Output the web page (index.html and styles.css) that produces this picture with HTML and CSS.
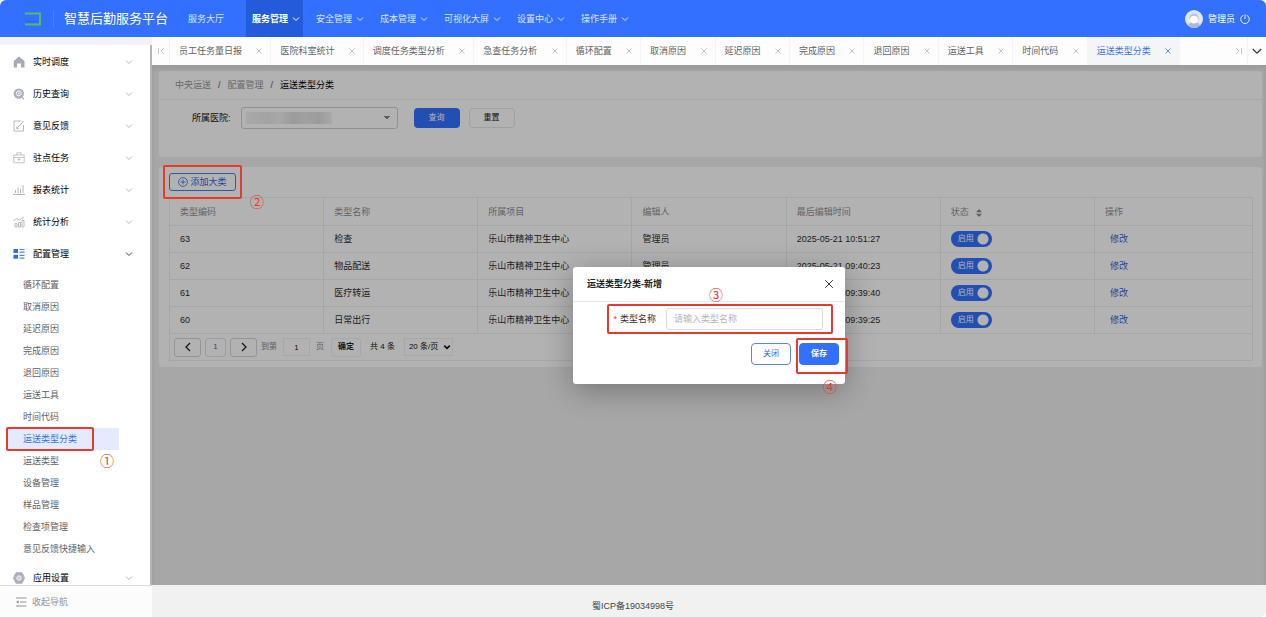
FILE: index.html
```html
<!DOCTYPE html>
<html lang="zh-CN">
<head>
<meta charset="utf-8">
<title>智慧后勤服务平台</title>
<link rel="stylesheet" href="styles.css">
</head>
<body>
<svg class="defs" aria-hidden="true">
  <symbol id="down" viewBox="0 0 8 8"><path d="M1 2.5 4 5.5 7 2.5" fill="none" stroke="currentColor"/></symbol>
  <symbol id="cross" viewBox="0 0 8 8"><path d="M1.5 1.5 6.5 6.5M6.5 1.5 1.5 6.5" fill="none" stroke="currentColor" stroke-width=".8"/></symbol>
</svg>
<div class="app">
  <header class="topbar">
    <svg class="logo" viewBox="0 0 18 16"><path d="M1 2.5H16V13.5H1" fill="none" stroke="#58b86a" stroke-width="2"/><path d="M3 10.5H13" stroke="#2f62d8"/></svg>
    <h1 class="brand">智慧后勤服务平台</h1>
    <nav class="topnav">
      <a class="topnav-item" href="#">服务大厅</a>
      <a class="topnav-item active" href="#">服务管理<svg class="ico8"><use href="#down"/></svg></a>
      <a class="topnav-item" href="#">安全管理<svg class="ico8"><use href="#down"/></svg></a>
      <a class="topnav-item" href="#">成本管理<svg class="ico8"><use href="#down"/></svg></a>
      <a class="topnav-item" href="#">可视化大屏<svg class="ico8"><use href="#down"/></svg></a>
      <a class="topnav-item" href="#">设置中心<svg class="ico8"><use href="#down"/></svg></a>
      <a class="topnav-item" href="#">操作手册<svg class="ico8"><use href="#down"/></svg></a>
    </nav>
    <div class="user">
      <svg class="avatar" viewBox="0 0 18 18"><circle cx="9" cy="9" r="9" fill="#dfe8fb"/><path d="M3 15.5Q4 12 9 12T15 15.5Q12 18 9 18T3 15.5" fill="#a9b9dd"/><circle cx="9" cy="8" r="4.6" fill="#b4c3e4"/><circle cx="9" cy="9.6" r="3.9" fill="#fff"/></svg>
      <span>管理员</span>
      <button class="power" aria-label="退出"><svg viewBox="0 0 10 10"><path d="M3.3 1.3A4.3 4.3 0 1 0 6.7 1.3M5 .5V5" fill="none" stroke="currentColor" stroke-width=".9"/></svg></button>
    </div>
  </header>
  <div class="body">
    <aside class="sidebar">
      <ul class="menu">
        <li><a class="menu-item" href="#"><svg class="ico12" viewBox="0 0 12 12"><path d="M6 .5 11.5 5V11.5H8V7.5H4V11.5H.8V5Z" fill="#a6aab8"/></svg><span>实时调度</span><svg class="ico8"><use href="#down"/></svg></a></li>
        <li><a class="menu-item" href="#"><svg class="ico12" viewBox="0 0 12 12"><circle cx="5.8" cy="5.6" r="5.2" fill="#adb0bf"/><circle cx="5.8" cy="5.4" r="2.4" fill="none" stroke="#fff"/><circle cx="5.8" cy="5.4" r=".8" fill="#fff"/><path d="M7.5 7.5 11 11.3" stroke="#adb0bf" stroke-width="1.2"/></svg><span>历史查询</span><svg class="ico8"><use href="#down"/></svg></a></li>
        <li><a class="menu-item" href="#"><svg class="ico12" viewBox="0 0 12 12"><path d="M8 1H1V11H10.5V5M4 8.3 11 .8M3.6 6.5V8.5H5.5" fill="none" stroke="#b0b2ba" stroke-width=".9"/></svg><span>意见反馈</span><svg class="ico8"><use href="#down"/></svg></a></li>
        <li><a class="menu-item" href="#"><svg class="ico12" viewBox="0 0 12 12"><path d="M.8 3H11.2V10.8H.8ZM3.8 3V.8H8.2V3M.8 5.5H11.2M4.5 7.5H7.5M6 6V9" fill="none" stroke="#b4b6be" stroke-width=".8"/></svg><span>驻点任务</span><svg class="ico8"><use href="#down"/></svg></a></li>
        <li><a class="menu-item" href="#"><svg class="ico12" viewBox="0 0 12 12"><path d="M0 10.5H12M2.5 9V6M5 9V3.5M7.5 9V5M10 9V1" fill="none" stroke="#b4b6be"/></svg><span>报表统计</span><svg class="ico8"><use href="#down"/></svg></a></li>
        <li><a class="menu-item" href="#"><svg class="ico12" viewBox="0 0 12 12"><path d="M.5 5 3.5 2.5 6.5 4 11 .8M2 7.5H4V11H2ZM5.5 6.5H7.5V11H5.5ZM9 4.5H11V11H9Z" fill="none" stroke="#b4b6be" stroke-width=".9"/></svg><span>统计分析</span><svg class="ico8"><use href="#down"/></svg></a></li>
        <li class="open"><a class="menu-item" href="#"><svg class="ico12" viewBox="0 0 12 12"><path d="M.5 1H5V5H.5ZM.5 6.8H5V10.8H.5Z" fill="#2f6de0"/><path d="M6.5 1.5H11.5M6.5 4.2H11.5M6.5 7.3H11.5M6.5 10.2H11.5" stroke="#4a83ea" stroke-width="1.2"/></svg><span>配置管理</span><svg class="ico8"><use href="#down"/></svg></a>
          <ul class="submenu">
            <li><a href="#">循环配置</a></li>
            <li><a href="#">取消原因</a></li>
            <li><a href="#">延迟原因</a></li>
            <li><a href="#">完成原因</a></li>
            <li><a href="#">退回原因</a></li>
            <li><a href="#">运送工具</a></li>
            <li><a href="#">时间代码</a></li>
            <li class="current"><a href="#">运送类型分类</a><span class="frame frame-menu"></span><span class="mark mark-menu">①</span></li>
            <li><a href="#">运送类型</a></li>
            <li><a href="#">设备管理</a></li>
            <li><a href="#">样品管理</a></li>
            <li><a href="#">检查项管理</a></li>
            <li><a href="#">意见反馈快捷输入</a></li>
          </ul>
        </li>
        <li><a class="menu-item" href="#"><svg class="ico12" viewBox="0 0 12 12"><path d="M3 .8H9L11.5 6 9 11.2H3L.5 6Z" fill="#adb0bf" stroke="#adb0bf" stroke-linejoin="round"/><circle cx="6" cy="6" r="2.2" fill="#c9cbd6" stroke="#fff" stroke-width=".8"/></svg><span>应用设置</span><svg class="ico8"><use href="#down"/></svg></a></li>
      </ul>
      <button class="collapse"><svg class="ico12" viewBox="0 0 12 12"><path d="M1 2H11.5M5 6H11.5M1 10H11.5" stroke="currentColor"/><path d="M3.6 4.2V7.8L1 6Z" fill="currentColor"/></svg>收起导航</button>
    </aside>
    <main class="main">
      <div class="tabs">
        <button class="tabs-end" aria-label="向左"><svg class="ico8" viewBox="0 0 8 8"><path d="M1.5 1V7M7 1 4 4 7 7" fill="none" stroke="currentColor" stroke-width=".8"/></svg></button>
        <div class="tab-list">
          <a class="tab" href="#">员工任务量日报<svg class="ico8"><use href="#cross"/></svg></a>
          <a class="tab" href="#">医院科室统计<svg class="ico8"><use href="#cross"/></svg></a>
          <a class="tab" href="#">调度任务类型分析<svg class="ico8"><use href="#cross"/></svg></a>
          <a class="tab" href="#">急查任务分析<svg class="ico8"><use href="#cross"/></svg></a>
          <a class="tab" href="#">循环配置<svg class="ico8"><use href="#cross"/></svg></a>
          <a class="tab" href="#">取消原因<svg class="ico8"><use href="#cross"/></svg></a>
          <a class="tab" href="#">延迟原因<svg class="ico8"><use href="#cross"/></svg></a>
          <a class="tab" href="#">完成原因<svg class="ico8"><use href="#cross"/></svg></a>
          <a class="tab" href="#">退回原因<svg class="ico8"><use href="#cross"/></svg></a>
          <a class="tab" href="#">运送工具<svg class="ico8"><use href="#cross"/></svg></a>
          <a class="tab" href="#">时间代码<svg class="ico8"><use href="#cross"/></svg></a>
          <a class="tab active" href="#">运送类型分类<svg class="ico8"><use href="#cross"/></svg></a>
        </div>
        <button class="tabs-end" aria-label="向右"><svg class="ico8" viewBox="0 0 8 8"><path d="M6.5 1V7M1 1 4 4 1 7" fill="none" stroke="currentColor" stroke-width=".8"/></svg></button>
        <button class="tabs-end dark" aria-label="更多"><svg class="ico10" viewBox="0 0 10 10"><path d="M.8 3 5 7.2 9.2 3" fill="none" stroke="currentColor" stroke-width="1.1"/></svg></button>
      </div>
      <div class="content">
        <section class="card search">
          <nav class="crumbs"><a href="#">中央运送</a><span>/</span><a href="#">配置管理</a><span>/</span><b>运送类型分类</b></nav>
          <form class="filters">
            <label for="hospital">所属医院:</label>
            <select id="hospital" class="hospital"><option></option></select>
            <button type="button" class="btn primary">查询</button>
            <button type="button" class="btn plain">重置</button>
          </form>
        </section>
        <section class="card list">
          <div class="toolbar">
            <button class="add"><svg class="ico10" viewBox="0 0 10 10"><circle cx="5" cy="5" r="4.4" fill="none" stroke="currentColor" stroke-width=".8"/><path d="M5 2.6V7.4M2.6 5H7.4" stroke="currentColor" stroke-width=".8"/></svg>添加大类</button>
            <span class="frame frame-add"></span><span class="mark mark-add">②</span>
          </div>
          <table class="grid">
            <thead><tr><th>类型编码</th><th>类型名称</th><th>所属项目</th><th>编辑人</th><th>最后编辑时间</th><th>状态<svg class="sort" viewBox="0 0 8 10"><path d="M4 1 7 4.2H1ZM4 9 7 5.8H1Z" fill="currentColor"/></svg></th><th class="op">操作</th></tr></thead>
            <tbody>
              <tr><td>63</td><td>检查</td><td>乐山市精神卫生中心</td><td>管理员</td><td>2025-05-21 10:51:27</td><td><label class="switch"><input type="checkbox" checked><span>启用</span></label></td><td><a href="#">修改</a></td></tr>
              <tr><td>62</td><td>物品配送</td><td>乐山市精神卫生中心</td><td>管理员</td><td>2025-05-21 09:40:23</td><td><label class="switch"><input type="checkbox" checked><span>启用</span></label></td><td><a href="#">修改</a></td></tr>
              <tr><td>61</td><td>医疗转运</td><td>乐山市精神卫生中心</td><td>管理员</td><td>2025-05-21 09:39:40</td><td><label class="switch"><input type="checkbox" checked><span>启用</span></label></td><td><a href="#">修改</a></td></tr>
              <tr><td>60</td><td>日常出行</td><td>乐山市精神卫生中心</td><td>管理员</td><td>2025-05-21 09:39:25</td><td><label class="switch"><input type="checkbox" checked><span>启用</span></label></td><td><a href="#">修改</a></td></tr>
            </tbody>
          </table>
          <div class="pager">
            <button class="page-btn wide" aria-label="上一页"><svg class="ico10" viewBox="0 0 10 10"><path d="M7 1 3 5 7 9" fill="none" stroke="currentColor" stroke-width="1.3"/></svg></button>
            <button class="page-btn num">1</button>
            <button class="page-btn wide" aria-label="下一页"><svg class="ico10" viewBox="0 0 10 10"><path d="M3 1 7 5 3 9" fill="none" stroke="currentColor" stroke-width="1.3"/></svg></button>
            <label class="jump">到第<input value="1">页</label>
            <button class="page-btn ok">确定</button>
            <span class="total">共 4 条</span>
            <div class="size"><select aria-label="每页条数"><option>20 条/页</option></select><svg class="ico8" viewBox="0 0 8 8"><path d="M1.2 2.6 4 5.4 6.8 2.6" fill="none" stroke="currentColor" stroke-width="1.6"/></svg></div>
          </div>
        </section>
        <div class="overlay">
          <div class="dialog" role="dialog" aria-labelledby="dialog-title">
            <div class="dialog-head"><h2 id="dialog-title">运送类型分类-新增</h2><button class="close" aria-label="关闭窗口"><svg class="ico10" viewBox="0 0 10 10"><path d="M1.2 1.2 8.8 8.8M8.8 1.2 1.2 8.8" stroke="currentColor"/></svg></button></div>
            <div class="field">
              <label for="name"><i>*</i>类型名称</label>
              <input id="name" placeholder="请输入类型名称">
              <span class="frame frame-field"></span><span class="mark mark-field">③</span>
            </div>
            <div class="actions">
              <button class="dbtn">关闭</button>
              <div class="save"><button class="dbtn solid">保存</button><span class="frame frame-save"></span><span class="mark mark-save">④</span></div>
            </div>
          </div>
        </div>
      </div>
      <footer class="foot">蜀ICP备19034998号</footer>
    </main>
  </div>
</div>
</body>
</html>
```

FILE: styles.css
```css
* { box-sizing: border-box; }
body {
  margin: 0;
  background: #fff;
  color: #222;
  font: 9px/12px "Liberation Sans", "Noto Sans CJK SC", sans-serif;
}
a { color: inherit; text-decoration: none; }
ul { list-style: none; margin: 0; padding: 0; }
button, input, select { font: inherit; color: inherit; margin: 0; }
button { padding: 0; border: 0; background: none; white-space: nowrap; }
h1, h2 { margin: 0; }
svg { display: block; flex: none; }
.defs { position: absolute; width: 0; height: 0; }
.ico8 { width: 8px; height: 8px; }
.ico10 { width: 10px; height: 10px; }
.ico12 { width: 12px; height: 12px; }

.app {
  display: flex;
  flex-direction: column;
  height: 100vh;
  border-radius: 6px;
  overflow: hidden;
}

/* top bar */
.topbar {
  display: flex;
  align-items: center;
  flex: none;
  height: 37px;
  padding: 0 16px 0 24px;
  background: #3370ff;
  color: #fff;
}
.logo { width: 18px; height: 16px; }
.brand {
  margin-left: 11px;
  padding-left: 10px;
  border-left: 1px solid #4a80fd;
  font-size: 13px;
  line-height: 18px;
  font-weight: 400;
}
.topnav { display: flex; gap: 7px; margin-left: 14px; align-self: stretch; }
.topnav-item {
  display: flex;
  align-items: center;
  gap: 4px;
  padding: 0 3px 0 6px;
  color: #d9e4ff;
}
.topnav-item:first-child { padding-right: 15px; }
.topnav-item.active { background: #235bdb; color: #fff; font-weight: 700; }
.user { display: flex; align-items: center; gap: 5px; margin-left: auto; }
.avatar { width: 18px; height: 18px; }
.power svg { width: 10px; height: 10px; }

/* sidebar */
.body { display: flex; flex: 1; min-height: 0; }
.sidebar {
  display: flex;
  flex-direction: column;
  flex: none;
  width: 152px;
  padding-top: 8px;
  background: #f3f3f6;
}
.menu {
  flex: 1;
  min-height: 0;
  overflow: hidden;
  padding-top: 1px;
  border-right: 2px solid #b4b4b4;
  background: #fff;
}
.menu-item {
  display: flex;
  align-items: center;
  height: 32px;
  padding: 0 17px 0 13px;
  color: #000;
}
.menu-item span { flex: 1; margin-left: 8px; }
.menu-item .ico8 { color: #b9bcc4; }
.open .menu-item .ico8 { color: #444; }
.submenu { padding: 4px 0 2px; color: #606266; }
.submenu li { position: relative; margin: 0 31px 0 6px; padding-left: 17px; line-height: 22px; }
.submenu a { display: block; }
.submenu .current { background: #e4ebff; color: #3a6fea; }
.collapse {
  display: flex;
  align-items: center;
  gap: 5px;
  flex: none;
  height: 32px;
  padding-left: 15px;
  border-top: 1px solid #ddd;
  background: #fcfcfc;
  color: #909399;
}

/* numbered callouts */
.frame { position: absolute; border: 2px solid #e43a30; border-radius: 2px; pointer-events: none; }
.mark {
  position: absolute;
  color: #e43a30;
  font: 14px/14px "Noto Sans CJK SC", sans-serif;
}
.frame-menu { left: 0; top: -1px; width: 88px; height: 24px; }
.mark-menu { left: 94px; top: 25px; }
.frame-add { left: -6px; top: -8px; width: 79px; height: 34px; z-index: 3; }
.mark-add { left: 81px; top: 21px; z-index: 3; }
.frame-field { left: 34px; right: 12px; top: -4px; bottom: -4px; }
.mark-field { left: 136px; top: -21px; }
.frame-save { inset: -5px -9px -9px -3px; }
.mark-save { left: 24px; top: 36px; }

/* page tabs */
.main { display: flex; flex-direction: column; flex: 1; min-width: 0; }
.tabs { display: flex; flex: none; height: 28px; background: #fdfdfd; }
.tabs-end {
  display: flex;
  align-items: center;
  justify-content: center;
  width: 18px;
  border-right: 1px solid #f2f2f2;
  color: #b8b8b8;
}
.tabs-end.dark { color: #333; border: 0; }
.tab-list { display: flex; flex: 1; min-width: 0; padding-right: 50px; }
.tab {
  display: flex;
  align-items: center;
  justify-content: space-between;
  flex: 1 0 auto;
  gap: 12px;
  padding: 0 7px 0 9px;
  border-right: 1px solid #f4f4f4;
  color: #606266;
  white-space: nowrap;
}
.tab .ico8 { color: #b4b4b4; }
.tab.active { background: #f4f5f6; }
.tab.active, .tab.active .ico8 { color: #3f72e6; }

/* content */
.content {
  position: relative;
  display: flex;
  flex-direction: column;
  gap: 10px;
  flex: 1;
  min-height: 0;
  padding: 6px 4px 6px 7px;
  background: #f0f0f0;
}
.card { background: #fff; border-radius: 3px; }
.search { padding-bottom: 28px; }
.crumbs {
  display: flex;
  align-items: center;
  gap: 7px;
  height: 29px;
  padding-left: 16px;
  border-bottom: 1px solid #eee;
  color: #999;
}
.crumbs span { color: #555; }
.crumbs b { font-weight: 400; color: #000; }
.filters { display: flex; align-items: center; gap: 9px; padding: 7px 0 0 33px; }
.filters label { margin-right: 1px; color: #111; }
.hospital {
  appearance: none;
  width: 157px;
  height: 22px;
  margin-right: 7px;
  border: 1px solid #d0d0d0;
  border-radius: 3px;
  background:
    conic-gradient(from -45deg at 50% 100%, #888 90deg, transparent 0) right 6px center / 8px 4px no-repeat,
    linear-gradient(90deg, #f2f2f2, #eaeaea 25%, #f0f0f0 40%, #dedede 55%, #e6e6e6 70%, #dfdfdf 85%, #f2f2f2) 4px center / 86px 12px no-repeat,
    #fff;
}
.btn { width: 46px; height: 20px; border-radius: 4px; font-size: 8px; }
.primary { background: #3370ff; color: #fff; }
.plain { border: 1px solid #e6e6e6; }

.list { padding: 6px 9px 6px 10px; }
.toolbar { position: relative; margin-bottom: 6px; }
.add {
  display: flex;
  align-items: center;
  justify-content: center;
  gap: 2px;
  width: 67px;
  height: 18px;
  border: 1px solid #4c7cf0;
  border-radius: 3px;
  color: #3364e6;
}
.grid { width: 100%; border-collapse: collapse; table-layout: fixed; }
.grid th, .grid td {
  height: 27px;
  padding: 0 10px;
  border: 1px solid #eee;
  text-align: left;
  white-space: nowrap;
}
.grid th { height: 28px; color: #909090; font-weight: 400; }
.grid .op { width: 158px; }
.grid td { color: #2c2c2c; }
.grid td a { margin-left: 5px; color: #3364d8; }
.sort { display: inline-block; width: 8px; height: 10px; margin-left: 6px; vertical-align: bottom; color: #888; }
.switch { position: relative; display: block; width: 41px; height: 16px; color: #fff; font-size: 8px; }
.switch input {
  appearance: none;
  display: block;
  width: 41px;
  height: 16px;
  border-radius: 8px;
  background: radial-gradient(circle at 32px 8px, #fff 5px, transparent 6px) #3370ff;
}
.switch span { position: absolute; left: 7px; top: 2px; }

.pager {
  display: flex;
  align-items: center;
  gap: 4px;
  height: 27px;
  padding-left: 4px;
  border: 1px solid #eee;
  border-top: 0;
  font-size: 8px;
}
.page-btn {
  display: flex;
  align-items: center;
  justify-content: center;
  height: 19px;
  border: 1px solid #d6d6d6;
  border-radius: 3px;
}
.wide { width: 27px; }
.num { width: 21px; color: #3b66cc; border-color: #e2e2e2; }
.ok { width: 30px; border-color: #f0f0f0; font-weight: 700; }
.jump { display: flex; align-items: center; gap: 6px; margin-right: 3px; color: #888; }
.jump input { width: 27px; height: 18px; border: 1px solid #f0f0f0; text-align: center; color: #222; }
.total { margin: 0 5px; }
.size { position: relative; color: #111; }
.size select {
  appearance: none;
  width: 49px;
  height: 18px;
  padding: 0 0 0 4px;
  border: 1px solid #f0f0f0;
  background: none;
}
.size .ico8 { position: absolute; right: 2px; top: 5px; pointer-events: none; }

/* dialog */
.overlay {
  position: absolute;
  inset: 0;
  z-index: 2;
  display: flex;
  align-items: center;
  justify-content: center;
  overflow: hidden;
  background: rgba(0, 0, 0, .3);
  box-shadow: inset 0 4px 5px rgba(0, 0, 0, .08);
}
.dialog {
  width: 272px;
  padding-bottom: 19px;
  border-radius: 3px;
  background: #fff;
  box-shadow: 0 6px 30px rgba(0, 0, 0, .3);
}
.dialog-head {
  display: flex;
  align-items: center;
  justify-content: space-between;
  height: 35px;
  padding: 0 11px 0 14px;
  border-bottom: 1px solid #e8e8e8;
}
.dialog-head h2 { font-size: 9px; line-height: 12px; font-weight: 700; }
.close { color: #333; }
.field {
  position: relative;
  display: flex;
  align-items: center;
  gap: 10px;
  margin-top: 6px;
  padding: 0 22px 0 39px;
}
.field label { color: #333; width: 44px; text-align: right; white-space: nowrap; }
.field i { margin-right: 3px; font-style: normal; color: #e43a30; }
.field input {
  flex: 1;
  min-width: 0;
  height: 22px;
  padding: 0 7px;
  border: 1px solid #dcdcdc;
  border-radius: 3px;
}
.field input::placeholder { color: #b5b5b5; }
.actions { display: flex; justify-content: flex-end; gap: 8px; margin-top: 13px; padding-right: 6px; }
.save { position: relative; }
.dbtn {
  display: block;
  width: 40px;
  height: 22px;
  border: 1px solid #5b87dd;
  border-radius: 4px;
  font-size: 8px;
  color: #3364d8;
}
.dbtn.solid { border-color: #3370ff; background: #3370ff; color: #fff; font-weight: 700; }

.foot {
  flex: none;
  height: 32px;
  padding: 15px 152px 0 0;
  background: #f1f1f1;
  color: #444;
  text-align: center;
}
```
